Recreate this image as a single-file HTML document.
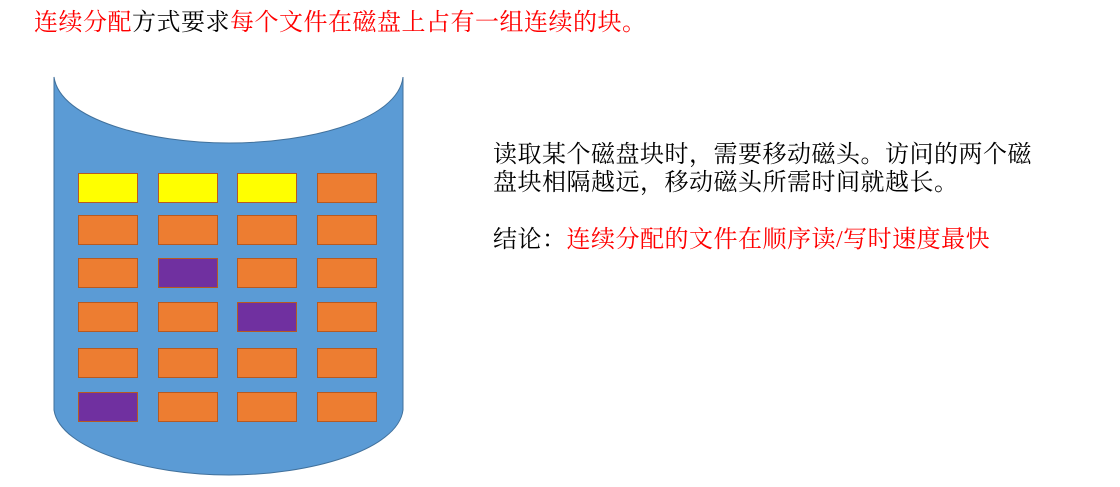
<!DOCTYPE html>
<html><head><meta charset="utf-8"><style>
body{margin:0;width:1120px;height:487px;background:#fff;position:relative;overflow:hidden;font-family:"Liberation Serif","Noto Serif CJK SC","Noto Sans CJK SC",serif;}
.t{position:absolute;font-size:24px;line-height:28px;letter-spacing:0.5px;color:#000;white-space:nowrap}
.r{color:#ff0000}
.b{position:absolute;width:58px;height:28px;border:1px solid #b65a22;background:#ed7d31}
.y{background:#ffff00}.p{background:#7030a0}
</style></head><body>
<div class="t" style="left:34px;top:9px"><span class="r">连续分配</span>方式要求<span class="r">每个文件在磁盘上占有一组连续的块。</span></div>
<svg style="position:absolute;left:0;top:0" width="1120" height="487">
<path d="M54,77 C60,120 150,143 229,143 C310,143 398,120 403,77 L403,410 C398,450 310,475 229,475 C150,475 60,450 54,410 Z" fill="#5b9bd5" stroke="#41719c" stroke-width="1"/>
</svg>
<div class="b y" style="left:78px;top:173px"></div><div class="b y" style="left:158px;top:173px"></div><div class="b y" style="left:237px;top:173px"></div><div class="b" style="left:317px;top:173px"></div>
<div class="b" style="left:78px;top:215px"></div><div class="b" style="left:158px;top:215px"></div><div class="b" style="left:237px;top:215px"></div><div class="b" style="left:317px;top:215px"></div>
<div class="b" style="left:78px;top:258px"></div><div class="b p" style="left:158px;top:258px"></div><div class="b" style="left:237px;top:258px"></div><div class="b" style="left:317px;top:258px"></div>
<div class="b" style="left:78px;top:302px"></div><div class="b" style="left:158px;top:302px"></div><div class="b p" style="left:237px;top:302px"></div><div class="b" style="left:317px;top:302px"></div>
<div class="b" style="left:78px;top:348px"></div><div class="b" style="left:158px;top:348px"></div><div class="b" style="left:237px;top:348px"></div><div class="b" style="left:317px;top:348px"></div>
<div class="b p" style="left:78px;top:392px"></div><div class="b" style="left:158px;top:392px"></div><div class="b" style="left:237px;top:392px"></div><div class="b" style="left:317px;top:392px"></div>
<div class="t" style="left:493px;top:141px">读取某个磁盘块时，需要移动磁头。访问的两个磁</div>
<div class="t" style="left:493px;top:169px">盘块相隔越远，移动磁头所需时间就越长。</div>
<div class="t" style="left:493px;top:226px">结论：<span class="r">连续分配的文件在顺序读/写时速度最快</span></div>
</body></html>
